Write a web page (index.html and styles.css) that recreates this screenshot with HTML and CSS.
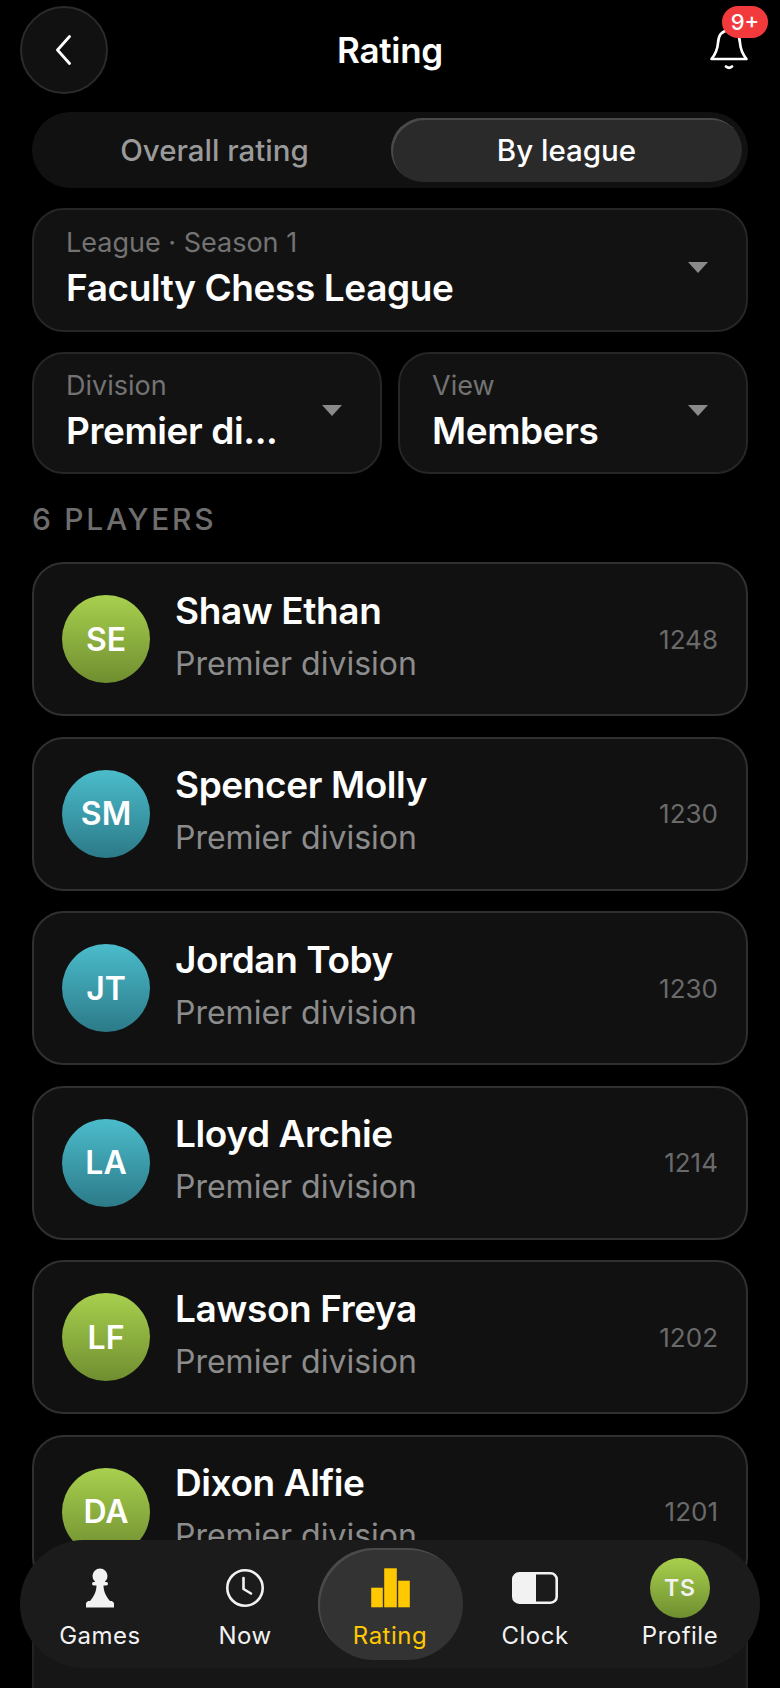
FILE: index.html
```html
<!DOCTYPE html>
<html lang="en">
<head>
    <meta charset="UTF-8">
    <meta name="viewport" content="width=device-width, initial-scale=1.0">
    <title>Rating</title>
    <link rel="stylesheet" href="styles.css">
</head>
<body>
    <div class="screen">
        <header class="top-bar">
            <button class="back-button">
                <svg width="20" height="30" viewBox="0 0 20 30"><path d="M15.5 1.500 L3.500 15 L15.500 28.500" fill="none" stroke="#fff" stroke-width="2.800" stroke-linecap="round" stroke-linejoin="round"/></svg>
            </button>
            <h1>Rating</h1>
            <div class="bell">
                <svg width="40" height="44" viewBox="0 0 40 44"><path d="M2.500 33 C6.500 28 8.500 24 9 17 C9.500 9 13 4.500 20 4.500 C27 4.500 30.500 9 31 17 C31.500 24 33.500 28 37.500 33 Z" fill="none" stroke="#fff" stroke-width="2.700" stroke-linejoin="round"/><path d="M17 40.500 Q20 43 23 40.500" fill="none" stroke="#fff" stroke-width="2.700" stroke-linecap="round"/></svg>
                <span class="badge">9+</span>
            </div>
        </header>

        <div class="tabs">
            <div class="tab">Overall rating</div>
            <div class="tab active">By league</div>
        </div>

        <div class="select select-wide">
            <div class="select-text">
                <div class="select-label">League · Season 1</div>
                <div class="select-value">Faculty Chess League</div>
            </div>
            <span class="caret"></span>
        </div>

        <div class="select-row">
            <div class="select">
                <div class="select-text">
                    <div class="select-label">Division</div>
                    <div class="select-value">Premier di...</div>
                </div>
                <span class="caret"></span>
            </div>
            <div class="select">
                <div class="select-text">
                    <div class="select-label">View</div>
                    <div class="select-value">Members</div>
                </div>
                <span class="caret"></span>
            </div>
        </div>

        <div class="count">6 PLAYERS</div>

        <div class="player-list">
            <div class="player">
                <div class="avatar green">SE</div>
                <div class="player-info">
                    <div class="player-name">Shaw Ethan</div>
                    <div class="player-division">Premier division</div>
                </div>
                <div class="player-score">1248</div>
            </div>
            <div class="player">
                <div class="avatar teal">SM</div>
                <div class="player-info">
                    <div class="player-name">Spencer Molly</div>
                    <div class="player-division">Premier division</div>
                </div>
                <div class="player-score">1230</div>
            </div>
            <div class="player">
                <div class="avatar teal">JT</div>
                <div class="player-info">
                    <div class="player-name">Jordan Toby</div>
                    <div class="player-division">Premier division</div>
                </div>
                <div class="player-score">1230</div>
            </div>
            <div class="player">
                <div class="avatar teal">LA</div>
                <div class="player-info">
                    <div class="player-name">Lloyd Archie</div>
                    <div class="player-division">Premier division</div>
                </div>
                <div class="player-score">1214</div>
            </div>
            <div class="player">
                <div class="avatar green">LF</div>
                <div class="player-info">
                    <div class="player-name">Lawson Freya</div>
                    <div class="player-division">Premier division</div>
                </div>
                <div class="player-score">1202</div>
            </div>
            <div class="player">
                <div class="avatar green">DA</div>
                <div class="player-info">
                    <div class="player-name">Dixon Alfie</div>
                    <div class="player-division">Premier division</div>
                </div>
                <div class="player-score">1201</div>
            </div>
            <div class="player"></div>
        </div>

        <nav class="bottom-nav">
            <div class="nav-item">
                <div class="nav-icon">
                    <svg width="28" height="40" viewBox="0 0 28 40"><circle cx="14" cy="8" r="7.500" fill="#f2f2f2"/><rect x="6" y="14" width="16" height="3.500" rx="1.700" fill="#f2f2f2"/><path d="M10.500 17 C10.500 24 8 28 4 33 H24 C20 28 17.500 24 17.500 17 Z" fill="#f2f2f2"/><path d="M2 33 H26 L28 35 V39.500 H0 V35 Z" fill="#f2f2f2"/></svg>
                </div>
                <span>Games</span>
            </div>
            <div class="nav-item">
                <div class="nav-icon">
                    <svg width="40" height="40" viewBox="0 0 40 40"><circle cx="20" cy="20" r="17.700" fill="none" stroke="#f2f2f2" stroke-width="2.600"/><path d="M18.500 10 V21 L26 25.500" fill="none" stroke="#f2f2f2" stroke-width="2.600" stroke-linecap="round" stroke-linejoin="round"/></svg>
                </div>
                <span>Now</span>
            </div>
            <div class="nav-item active">
                <div class="nav-icon">
                    <svg width="39" height="40" viewBox="0 0 39 40"><rect x="0.200" y="19.700" width="11.600" height="19.600" fill="#ffc800"/><rect x="13.200" y="0.300" width="12.600" height="39" fill="#ffc800"/><rect x="27.200" y="12.700" width="11.600" height="26.600" fill="#ffc800"/></svg>
                </div>
                <span>Rating</span>
            </div>
            <div class="nav-item">
                <div class="nav-icon">
                    <svg width="46" height="32" viewBox="0 0 46 32"><rect x="1.300" y="1.300" width="43.400" height="29.400" rx="6" fill="none" stroke="#f2f2f2" stroke-width="2.600"/><path d="M7 1.500 H24 V30.500 H7 a5.500 5.500 0 0 1 -5.500 -5.500 V7 a5.500 5.500 0 0 1 5.500 -5.500 z" fill="#f2f2f2"/></svg>
                </div>
                <span>Clock</span>
            </div>
            <div class="nav-item">
                <div class="nav-icon">
                    <div class="avatar avatar-small green">TS</div>
                </div>
                <span>Profile</span>
            </div>
        </nav>
    </div>
</body>
</html>
```

FILE: styles.css
```css
* {
    box-sizing: border-box;
}

html, body {
    margin: 0;
    background: #000;
}

body {
    font-family: 'Inter', 'Roboto', sans-serif;
    color: #fff;
}

.screen {
    position: relative;
    width: 780px;
    height: 1688px;
    overflow: hidden;
    padding: 0 32px;
    background: #000;
}

/* Top bar */
.top-bar {
    display: flex;
    align-items: center;
    justify-content: space-between;
    height: 94px;
    padding-top: 6px;
    margin: 0 -12px;
}

.top-bar h1 {
    margin: 0;
    font-size: 35px;
    font-weight: 600;
    letter-spacing: -0.3px;
}

.back-button {
    display: flex;
    align-items: center;
    justify-content: center;
    width: 88px;
    height: 88px;
    padding: 0;
    background: #111;
    border: 2px solid #2b2b2b;
    border-radius: 50%;
}

.bell {
    position: relative;
    display: flex;
    justify-content: flex-end;
    width: 88px;
    height: 44px;
    padding-right: 11px;
    margin-bottom: 4px;
}

.badge {
    position: absolute;
    top: -20px;
    right: -8px;
    width: 46px;
    height: 32px;
    background: #f23a3c;
    border-radius: 16px;
    font-size: 22px;
    font-weight: 500;
    line-height: 32px;
    text-align: center;
}

/* Tabs */
.tabs {
    display: flex;
    height: 76px;
    margin-top: 18px;
    padding: 6px;
    background: #111;
    border-radius: 38px;
}

.tab {
    flex: 1;
    display: flex;
    align-items: center;
    justify-content: center;
    font-size: 29.500px;
    font-weight: 500;
    color: #9a9a9a;
}

.tab.active {
    flex: 0 0 351px;
    color: #fff;
    background: #2a2a2a;
    box-shadow: inset 2px 2px 0 #4a4a4a;
    border-radius: 32px;
}

/* Dropdowns */
.select {
    flex: 1;
    min-width: 0;
    display: flex;
    align-items: center;
    justify-content: space-between;
    height: 124px;
    padding: 0 38px 0 32px;
    background: #121212;
    border: 2px solid #262626;
    border-radius: 32px;
}

.select-wide {
    margin-top: 20px;
}

.select-row {
    display: flex;
    gap: 16px;
    margin-top: 20px;
}

.select-row .select {
    height: 122px;
}

.select-text {
    padding-bottom: 3px;
}

.select-label {
    font-size: 27px;
    line-height: 34px;
    color: #737373;
}

.select-value {
    margin-top: 5px;
    font-size: 37px;
    line-height: 46px;
    font-weight: 600;
    letter-spacing: -0.4px;
}

.caret {
    width: 0;
    height: 0;
    margin-bottom: 5px;
    border-left: 10px solid transparent;
    border-right: 10px solid transparent;
    border-top: 11px solid #8a8a8a;
}

.count {
    margin-top: 27px;
    font-size: 30px;
    line-height: 36px;
    font-weight: 500;
    letter-spacing: 2.700px;
    color: #6e6e6e;
}

/* Players */
.player-list {
    display: flex;
    flex-direction: column;
    gap: 20.500px;
    margin-top: 25px;
}

.player {
    flex: none;
    display: flex;
    align-items: center;
    height: 154px;
    padding: 0 28px;
    background: #111;
    border: 2px solid #303030;
    border-radius: 32px;
}

.player:last-child {
    background: #161616;
    border-color: #222;
}

.avatar {
    flex: none;
    display: flex;
    align-items: center;
    justify-content: center;
    width: 88px;
    height: 88px;
    border-radius: 50%;
    font-size: 32px;
    font-weight: 600;
}

.avatar.green {
    background: linear-gradient(180deg, #a8d04e, #6f8e30);
}

.avatar.teal {
    background: linear-gradient(180deg, #4bbccb, #2c7a88);
}

.avatar-small {
    width: 60px;
    height: 60px;
    font-size: 23px;
    letter-spacing: 1px;
}

.player-info {
    flex: 1;
    margin-left: 25px;
    padding-bottom: 6px;
}

.player-name {
    font-size: 37px;
    line-height: 46px;
    font-weight: 600;
    letter-spacing: -0.4px;
}

.player-division {
    margin-top: 9px;
    font-size: 32px;
    line-height: 42px;
    color: #8c8c8c;
}

.player-score {
    font-size: 26px;
    color: #6a6a6a;
}

/* Bottom nav lies over the list */
.bottom-nav {
    position: absolute;
    left: 20px;
    right: 20px;
    bottom: 20px;
    display: flex;
    align-items: center;
    height: 128px;
    padding: 0 7.500px;
    background: #1b1b1b;
    border-radius: 64px;
}

.nav-item {
    flex: 1;
    display: flex;
    flex-direction: column;
    align-items: center;
    height: 112px;
    padding-top: 20px;
    font-size: 24px;
    line-height: 30px;
    letter-spacing: 0.5px;
    color: #f2f2f2;
}

.nav-icon {
    display: flex;
    align-items: center;
    justify-content: center;
    height: 40px;
    margin-bottom: 13px;
}

.nav-item.active {
    color: #ffc800;
    background: #333;
    box-shadow: inset 2px 2px 0 #4a4a4a;
    border-radius: 56px;
}
```
